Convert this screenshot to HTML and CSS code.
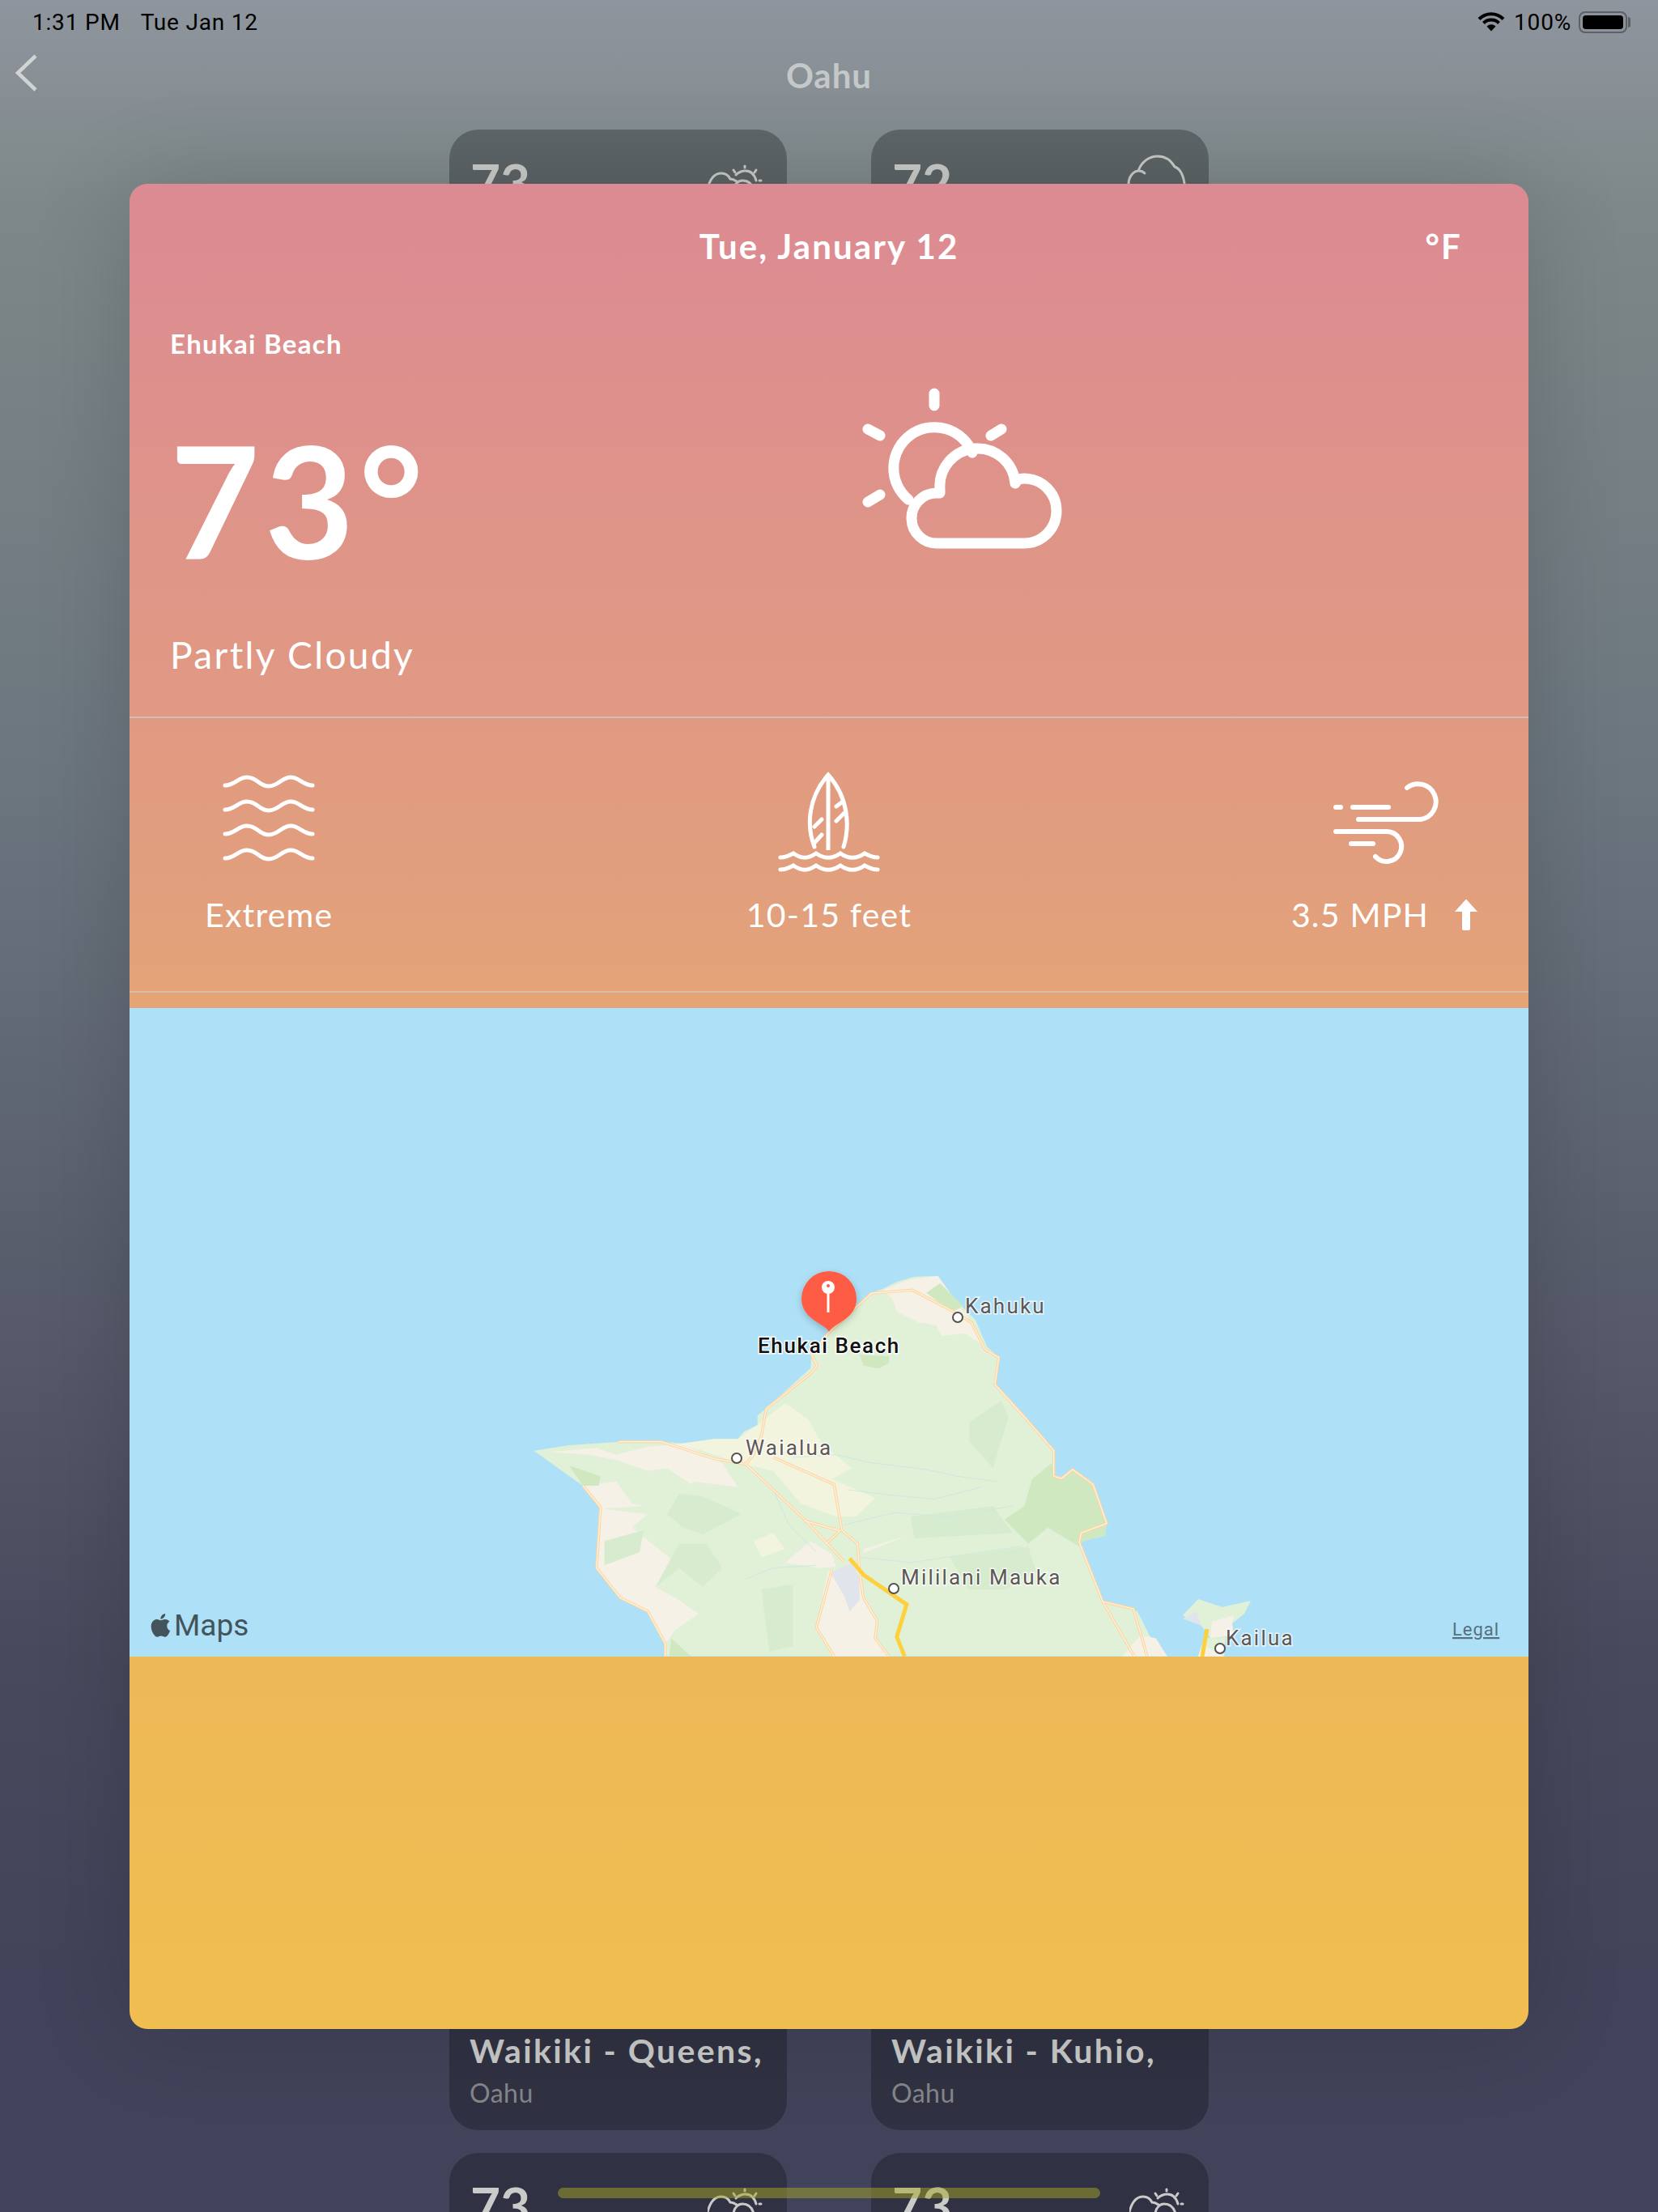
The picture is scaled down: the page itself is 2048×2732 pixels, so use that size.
FILE: index.html
```html
<!DOCTYPE html>
<html lang="en">
<head>
    <meta charset="UTF-8">
    <meta name="viewport" content="width=device-width, initial-scale=1.0">
    <title>Oahu - Ehukai Beach</title>
    <link rel="stylesheet" href="styles.css">
</head>
<body>

    <svg class="defs" width="0" height="0">
        <symbol id="mini-sun-cloud" viewBox="0 0 70 50">
            <g fill="none" stroke="currentColor" stroke-width="3" stroke-linecap="round">
                <path d="M46 4V6M32 9L34 12M60 9L58 12M64 22H66"/>
                <path d="M35 15C38 12 42 10 47 10C54 10 58 15 60 22"/>
                <path d="M0 32C3 20 8 13 17 13C22 13 26 16 28 20C30 20 33 21 36 23"/>
                <path d="M32 34C33 26 38 22 43 22C50 22 55 26 57 34"/>
            </g>
        </symbol>
    </svg>

    <div class="page">
        <div class="status-bar">
            <div class="status-left"><span>1:31 PM</span><span>Tue Jan 12</span></div>
            <div class="status-right">
                <svg class="wifi" viewBox="0 0 34 24" width="34" height="24">
                    <g fill="none" stroke="#000" stroke-width="4">
                        <path d="M2 8.500A21 21 0 0 1 32 8.500"/>
                        <path d="M7.500 13.500A13.500 13.500 0 0 1 26.500 13.500"/>
                    </g>
                    <path d="M11.500 17.500A8 8 0 0 1 22.500 17.500L17 23.500Z" fill="#000"/>
                </svg>
                <span>100%</span>
                <div class="battery"><div class="battery-fill"></div></div>
            </div>
        </div>

        <div class="nav">
            <svg class="back" viewBox="0 0 32 48" width="32" height="48">
                <path d="M28 3L6 24L28 45" fill="none" stroke="#d2d4d4" stroke-width="4.500"/>
            </svg>
            <div class="nav-title">Oahu</div>
        </div>

        <div class="spots">
            <div class="spot">
                <div class="spot-top">
                    <div class="spot-temp">73</div>
                    <svg class="mini-icon"><use href="#mini-sun-cloud"/></svg>
                </div>
            </div>
            <div class="spot">
                <div class="spot-top">
                    <div class="spot-temp">72</div>
                    <svg class="mini-cloud" viewBox="0 0 74 50" width="74" height="50">
                        <path d="M2 38C2 28 8 21 15 21C18 21 20 22 22 24M14 21C18 10 27 3 38 3C48 3 55 9 59 16C65 18 69 24 71 36" fill="none" stroke="currentColor" stroke-width="3" stroke-linecap="round"/>
                    </svg>
                </div>
            </div>
            <div class="spot"></div><div class="spot"></div>
            <div class="spot"></div><div class="spot"></div>
            <div class="spot"></div><div class="spot"></div>
            <div class="spot"></div><div class="spot"></div>
            <div class="spot"></div><div class="spot"></div>
            <div class="spot"></div><div class="spot"></div>
            <div class="spot spot-low">
                <div class="spot-name">Waikiki - Queens,</div>
                <div class="spot-island">Oahu</div>
            </div>
            <div class="spot spot-low">
                <div class="spot-name">Waikiki - Kuhio,</div>
                <div class="spot-island">Oahu</div>
            </div>
            <div class="spot">
                <div class="spot-top">
                    <div class="spot-temp">73</div>
                    <svg class="mini-icon"><use href="#mini-sun-cloud"/></svg>
                </div>
            </div>
            <div class="spot">
                <div class="spot-top">
                    <div class="spot-temp">73</div>
                    <svg class="mini-icon"><use href="#mini-sun-cloud"/></svg>
                </div>
            </div>
        </div>

        <div class="sheet">
            <div class="today">
                <div class="date-row">
                    <div></div>
                    <div class="date">Tue, January 12</div>
                    <div class="unit">°F</div>
                </div>
                <div class="location">Ehukai Beach</div>
                <div class="hero">
                    <div class="temp">73°</div>
                    <svg class="hero-icon" viewBox="1060 480 254 204" width="254" height="204">
                        <g fill="none" stroke="#fff" stroke-linecap="round" stroke-linejoin="round" stroke-width="13">
                            <path d="M1152 489V504M1235 533L1222 541M1070 533L1085 541M1085 614L1070 623"/>
                            <path d="M1120 620A50.500 50.500 0 1 1 1199 562"/>
                            <path d="M1156 674H1263A40 40 0 0 0 1263 594C1258 594 1254 596 1252 600A44 44 0 0 0 1159 607V612H1154A31 31 0 0 0 1156 674Z"/>
                        </g>
                    </svg>
                </div>
                <div class="summary">Partly Cloudy</div>
            </div>

            <div class="stats">
                <div class="stat stat-swell">
                    <svg viewBox="259 950 150 130" width="150" height="130">
                        <g fill="none" stroke="#fff" stroke-width="5" stroke-linecap="round">
                            <path d="M280 970C292 970 296 960 307 960C320 960 322 971 334 971C346 971 350 960 361 960C372 960 376 970 388 970"/>
                            <path d="M280 1000C292 1000 296 990 307 990C320 990 322 1001 334 1001C346 1001 350 990 361 990C372 990 376 1000 388 1000"/>
                            <path d="M280 1030C292 1030 296 1020 307 1020C320 1020 322 1031 334 1031C346 1031 350 1020 361 1020C372 1020 376 1030 388 1030"/>
                            <path d="M280 1060C292 1060 296 1050 307 1050C320 1050 322 1061 334 1061C346 1061 350 1050 361 1050C372 1050 376 1060 388 1060"/>
                        </g>
                    </svg>
                    <div class="stat-label">Extreme</div>
                </div>
                <div class="stat">
                    <svg viewBox="949 950 150 130" width="150" height="130">
                        <g fill="none" stroke="#fff" stroke-width="5" stroke-linecap="round">
                            <path d="M1006 1046C996 1020 998 985 1023 957C1048 985 1050 1020 1042 1046"/>
                            <path d="M1023 957V1050" stroke-linecap="butt"/>
                            <path d="M1006 1021L1015 1012M1006 1041L1015 1031M1033 996L1041 990M1033 1014L1043 1004"/>
                            <path d="M964 1059C972 1059 976 1056 980 1054C990 1061 998 1061 1008 1054C1018 1061 1028 1061 1038 1054C1048 1061 1058 1061 1068 1054C1072 1056 1076 1059 1084 1059"/>
                            <path d="M964 1074C972 1074 976 1071 980 1069C990 1076 998 1076 1008 1069C1018 1076 1028 1076 1038 1069C1048 1076 1058 1076 1068 1069C1072 1071 1076 1074 1084 1074"/>
                        </g>
                    </svg>
                    <div class="stat-label">10-15 feet</div>
                </div>
                <div class="stat stat-wind">
                    <svg viewBox="1635 950 150 130" width="150" height="130">
                        <g fill="none" stroke="#fff" stroke-width="6" stroke-linecap="round">
                            <path d="M1650 997H1656M1671 997H1715M1678 1012H1755A22 22 0 1 0 1738 973"/>
                            <path d="M1650 1027H1713A18.500 18.500 0 1 1 1699 1058M1669 1042H1696"/>
                        </g>
                    </svg>
                    <div class="stat-label">
                        <span>3.5 MPH</span>
                        <svg class="arrow" viewBox="0 0 28 40" width="28" height="40">
                            <path d="M14 0.500L28 16H19V37Q19 39 17 39H11Q9 39 9 37V16H0Z" fill="#fff"/>
                        </svg>
                    </div>
                </div>
            </div>

            <svg class="map" viewBox="160 1245 1728 801" width="1728" height="801">
                <defs>
                    <filter id="pin-shadow" x="-40%" y="-40%" width="180%" height="180%">
                        <feDropShadow dx="0" dy="3" stdDeviation="5" flood-color="#000" flood-opacity="0.22"/>
                    </filter>
                    <g id="roads">
                        <path d="M255 722L365 722L500 785L580 805L600 770L620 700L632 600L745 470L762 440L748 400L790 320L900 172L1005 160L1110 240L1155 280L1190 380L1225 410L1215 510L1290 630L1365 755L1365 850L1385 858L1413 825L1465 880L1500 1025L1435 1060L1430 1095L1490 1315L1570 1517"/>
                        <path d="M1490 1315L1568 1341L1603 1517"/>
                        <path d="M580 805L730 1010L830 1165"/>
                        <path d="M650 780L805 880L825 1050L865 1100L870 1200L880 1300L915 1385L910 1450L945 1517"/>
                        <path d="M730 1015L820 1052L785 1100"/>
                        <path d="M165 885L210 965L200 1190L260 1300L330 1350L375 1470L375 1517"/>
                        <path d="M800 1195L760 1410L805 1517"/>
                    </g>
                </defs>
                <rect x="160" y="1245" width="1728" height="801" fill="#aee1f7"/>

                <!-- map drawn in the coordinates of the island crop -->
                <g transform="translate(640 1540) scale(0.4847 0.3333)">
                    <path class="land" d="M40 755L130 735L255 722L365 722L420 728L500 712L560 712L575 685L610 660L610 625L635 595L745 450L748 405L790 320L900 170L930 155L965 130L1010 110L1070 108L1110 190L1165 270L1195 370L1225 410L1215 510L1290 630L1365 755L1365 850L1385 858L1415 825L1465 880L1500 1025L1495 1070L1440 1090L1430 1100L1460 1200L1490 1315L1578 1350L1609 1440L1654 1517L375 1517L375 1470L330 1350L260 1300L200 1190L210 965L165 885Z"/>
                    <path class="urban" d="M1000 120L1070 108L1110 190L1150 270L1190 370L1140 320L1080 330L1065 290L1020 280L965 240L955 195L930 160Z"/>
                    <path class="pale" d="M580 690L610 660L680 580L740 640L770 720L800 760L850 820L800 860L910 930L860 1000L810 1000L720 950L650 830L560 800L480 760L410 730L500 712L560 712Z"/>
                    <path class="urban" d="M80 760L200 745L250 770L330 740L420 730L520 800L560 890L450 870L440 880L380 820L330 830L250 790L180 770Z"/>
                    <path class="urban" d="M165 885L250 870L290 950L320 960L215 970L330 990L290 1040L350 1110L410 1180L350 1260L400 1300L460 1360L400 1420L375 1470L330 1350L260 1300L200 1190L210 965Z"/>
                    <path class="urban" d="M680 1170L745 1090L800 1140L810 1185L770 1190ZM880 1120L990 1070L880 1135Z"/>
                    <path class="urban" d="M790 1200L870 1180L880 1310L915 1385L910 1450L945 1517L800 1517L760 1410Z"/>
                    <path class="urban" d="M1540 1517L1585 1440L1625 1450L1654 1517Z"/>
                    <path class="pale" d="M600 1090L650 1060L680 1120L620 1150Z"/>
                    <path class="park" d="M1360 800L1365 850L1385 858L1415 825L1465 880L1500 1025L1495 1070L1440 1090L1430 1110L1350 1040L1300 1100L1240 1010L1290 960L1310 860Z"/>
                    <path class="park-light" d="M1100 1150L1300 1110L1320 1200L1240 1270L1150 1270Z"/>
                    <path class="park" d="M870 400L945 405L945 430L920 450L880 440Z"/>
                    <path class="park" d="M1040 170L1075 135L1135 220L1105 240Z"/>
                    <path class="park-light" d="M380 990L410 915L440 920L470 925L570 990L470 1065L420 1040Z"/>
                    <path class="park-light" d="M1150 650L1230 570L1250 630L1210 820L1150 720Z"/>
                    <path class="park-light" d="M1000 1000L1210 960L1260 1060L1010 1080Z"/>
                    <path class="park-light" d="M620 1270L700 1250L700 1480L640 1500Z"/>
                    <path class="park" d="M130 810L210 850L205 885L165 885ZM385 1517L390 1450L440 1517Z"/>
                    <path class="park-light" d="M220 1090L320 1050L310 1130L220 1180ZM350 1260L410 1100L480 1100L520 1190L470 1260L410 1190Z"/>
                    <path class="lake" d="M795 1205L855 1170L870 1230L870 1310L845 1350L830 1290Z"/>

                    <g class="streams">
                        <path d="M700 780L810 770L900 800L1040 825L1120 850L1220 870"/>
                        <path d="M840 900L950 920L1060 935L1180 890"/>
                        <path d="M830 1030L960 985L1100 1000L1260 960"/>
                        <path d="M870 1150L1000 1170L1280 1110"/>
                        <path d="M580 1230L650 1190L760 1180"/>
                        <path d="M650 900L690 1030L760 1130"/>
                    </g>

                    <use class="road-edge" href="#roads"/>
                    <use class="road-core" href="#roads"/>
                    <path class="highway" d="M845 1155L880 1215L990 1325L965 1445L985 1517"/>
                </g>

                <path class="land" d="M1461 1995L1480 1975L1510 1985L1545 1977L1537 1993L1522 2005L1524 2020L1495 2023L1484 2008Z"/>
                <path class="urban" d="M1495 2023L1497 2003L1524 1995L1522 2005L1524 2020Z"/>
                <path class="lake" d="M1461 1999L1478 1990L1484 2008Z"/>
                <path class="land" d="M1480 2046L1488 2023L1514 2022L1512 2046Z"/>
                <path class="urban" d="M1480 2046L1485 2030L1500 2040L1512 2046Z"/>
                <path class="highway" d="M1491 2012L1485 2046"/>

                <path class="pin" d="M1024 1645C1020 1635 990 1630 990 1604A34 34 0 0 1 1058 1604C1058 1630 1028 1635 1024 1645Z" filter="url(#pin-shadow)"/>
                <circle cx="1023" cy="1590" r="8" fill="#fff"/>
                <circle cx="1023" cy="1588" r="2" fill="#ff5b44"/>
                <rect x="1021.500" y="1596" width="3" height="25" fill="#fff"/>

                <circle class="town" cx="1183" cy="1627" r="6"/>
                <circle class="town" cx="910" cy="1801" r="6"/>
                <circle class="town" cx="1104" cy="1962" r="6"/>
                <circle class="town" cx="1507" cy="2036" r="6"/>

                <text class="map-label beach" x="1024" y="1671">Ehukai Beach</text>
                <text class="map-label" x="1192" y="1622">Kahuku</text>
                <text class="map-label" x="921" y="1797">Waialua</text>
                <text class="map-label" x="1113" y="1957">Mililani Mauka</text>
                <text class="map-label" x="1514" y="2032">Kailua</text>

                <path class="apple" transform="translate(184 1993) scale(1.200)" d="M12.152 6.896c-.948 0-2.415-1.078-3.96-1.04-2.04.027-3.91 1.183-4.961 3.014-2.117 3.675-.546 9.103 1.519 12.09 1.013 1.454 2.208 3.09 3.792 3.039 1.52-.065 2.09-.987 3.935-.987 1.831 0 2.35.987 3.96.948 1.637-.026 2.676-1.48 3.676-2.948 1.156-1.688 1.636-3.325 1.662-3.415-.039-.013-3.182-1.221-3.22-4.857-.026-3.04 2.48-4.494 2.597-4.559-1.429-2.09-3.623-2.324-4.39-2.376-2-.156-3.675 1.09-4.61 1.09zM15.53 3.83c.843-1.012 1.4-2.427 1.245-3.83-1.207.052-2.662.805-3.532 1.818-.78.896-1.454 2.338-1.273 3.714 1.338.104 2.715-.688 3.559-1.701"/>
                <text class="maps-word" x="215" y="2020">Maps</text>
                <text class="legal" x="1794" y="2020">Legal</text>
            </svg>
        </div>

        <div class="home-bar"></div>
    </div>

</body>
</html>
```

FILE: styles.css
```css
* {
    box-sizing: border-box;
}

body {
    margin: 0;
    font-family: 'Lato', 'Noto Sans', sans-serif;
    color: white;
    background: #41435a;
}

.defs {
    position: absolute;
}

.page {
    position: relative;
    width: 2048px;
    height: 2732px;
    overflow: hidden;
    background: linear-gradient(180deg, #8f959e 0%, #7e8889 9%, #6b757e 36%, #565a6a 60%, #474a5c 75%, #41435a 90%);
}

/* status bar */

.status-bar {
    display: flex;
    justify-content: space-between;
    align-items: center;
    height: 54px;
    padding: 0 38px 0 40px;
    font-family: 'Roboto', sans-serif;
    font-size: 28px;
    letter-spacing: 0.8px;
    color: black;
}

.status-left {
    display: flex;
    gap: 25px;
}

.status-right {
    display: flex;
    align-items: center;
    gap: 9px;
}

.wifi {
    margin-right: 2px;
}

.battery {
    position: relative;
    width: 60px;
    height: 27px;
    padding: 3px;
    border: 2px solid #5c6166;
    border-radius: 8px;
}

.battery::after {
    content: "";
    position: absolute;
    top: 5px;
    right: -6px;
    width: 3px;
    height: 13px;
    border-radius: 0 3px 3px 0;
    background: #5c6166;
}

.battery-fill {
    height: 100%;
    border-radius: 4px;
    background: black;
}

/* nav */

.nav {
    position: relative;
    height: 106px;
    text-align: center;
}

.back {
    position: absolute;
    left: 16px;
    top: 12px;
}

.nav-title {
    padding-top: 13px;
    font-size: 42px;
    line-height: 52px;
    font-weight: 700;
    letter-spacing: 1px;
    color: #c4c8c9;
}

/* cards behind the sheet */

.spots {
    display: grid;
    grid-template-columns: 417px 417px;
    grid-auto-rows: 284.4px;
    justify-content: center;
    gap: 28px 104px;
}

.spot {
    padding: 30px 28px 30px 26px;
    border-radius: 36px;
    background: rgba(10, 14, 16, 0.3);
    color: #c9cbc9;
}

.spot-top {
    display: flex;
    justify-content: space-between;
}

.spot-temp {
    font-size: 64px;
    line-height: 70px;
    font-weight: 700;
}

.mini-icon {
    width: 70px;
    height: 50px;
    margin-top: 11px;
}

.mini-cloud {
    margin-right: -1px;
}

.spot-low {
    display: flex;
    flex-direction: column;
    justify-content: flex-end;
    padding: 0 25px 26px;
}

.spot-name {
    font-size: 41px;
    line-height: 56px;
    font-weight: 700;
    letter-spacing: 2.4px;
    white-space: nowrap;
}

.spot-island {
    margin-top: 4px;
    font-size: 32px;
    line-height: 40px;
    letter-spacing: 0.5px;
    color: #84868a;
}

/* sheet */

.sheet {
    position: absolute;
    left: 160px;
    top: 227px;
    width: 1728px;
    height: 2279px;
    border-radius: 22px;
    overflow: hidden;
    background: linear-gradient(180deg, #dc8a93 0%, #e2a07c 40%, #eab25e 60%, #f0be50 100%);
    box-shadow: 0 0 120px rgba(0, 0, 0, 0.16);
}

.today {
    height: 660px;
    padding: 47px 50px 0;
    border-bottom: 2px solid rgba(205, 205, 205, 0.7);
}

.date-row {
    display: grid;
    grid-template-columns: 1fr auto 1fr;
    padding-right: 32px;
    padding-left: 32px;
    margin: 0 -50px;
    font-size: 42px;
    line-height: 60px;
    font-weight: 700;
    letter-spacing: 2.1px;
}

.unit {
    justify-self: end;
    padding-right: 50px;
}

.location {
    margin-top: 70px;
    font-size: 33px;
    line-height: 40px;
    font-weight: 700;
    letter-spacing: 1.3px;
}

.hero {
    display: grid;
    grid-template-columns: 852px auto;
    height: 198px;
    margin-top: 33px;
}

.temp {
    padding-top: 44px;
    font-size: 191px;
    line-height: 191px;
    font-weight: 700;
    letter-spacing: 6px;
}

.hero-icon {
    display: block;
}

.summary {
    margin-top: 106px;
    font-size: 46px;
    line-height: 56px;
    letter-spacing: 2.4px;
}

.stats {
    display: grid;
    grid-template-columns: 1fr auto 1fr;
    align-items: start;
    height: 339px;
    padding: 63px 63px 0;
    border-bottom: 2px solid rgba(205, 205, 205, 0.6);
}

.stat {
    display: flex;
    flex-direction: column;
    align-items: center;
}

.stat-swell {
    justify-self: start;
    margin-left: 30px;
}

.stat-wind {
    justify-self: end;
}

.stat-label {
    display: flex;
    align-items: center;
    margin-top: 25px;
    font-size: 41px;
    line-height: 50px;
    letter-spacing: 1.2px;
}

.arrow {
    margin-left: 32px;
}

/* map */

.map {
    display: block;
    margin-top: 19px;
}

.land {
    fill: #e0f1d8;
}

.urban {
    fill: #f6f1e6;
}

.pale {
    fill: #f3f4de;
}

.park {
    fill: #cfe8c0;
}

.park-light {
    fill: #d7ecce;
}

.lake {
    fill: #dfe5ea;
}

.streams path {
    fill: none;
    stroke: #cfe8e0;
    stroke-width: 1;
    vector-effect: non-scaling-stroke;
}

#roads path {
    fill: none;
    vector-effect: non-scaling-stroke;
}

.road-edge {
    stroke: #fbd7a4;
    stroke-width: 3.5;
}

.road-core {
    stroke: #fff3e2;
    stroke-width: 1.2;
}

.highway {
    fill: none;
    stroke: #fdd03c;
    stroke-width: 5;
    vector-effect: non-scaling-stroke;
}

.pin {
    fill: #ff5b44;
}

.town {
    fill: white;
    stroke: #55514e;
    stroke-width: 2;
}

.map-label {
    font-family: 'Roboto', sans-serif;
    font-size: 26px;
    letter-spacing: 2.2px;
    fill: #5c5856;
    stroke: rgba(255, 255, 255, 0.75);
    stroke-width: 3px;
    paint-order: stroke;
}

.beach {
    text-anchor: middle;
    fill: #111;
    stroke: white;
    font-weight: 500;
    letter-spacing: 1.6px;
}

.apple {
    fill: #44545c;
}

.maps-word {
    font-family: 'Roboto', sans-serif;
    font-size: 37px;
    fill: #44545c;
}

.legal {
    font-family: 'Roboto', sans-serif;
    font-size: 22px;
    letter-spacing: 1px;
    fill: #56707e;
    text-decoration: underline;
}

.home-bar {
    position: absolute;
    left: 689px;
    top: 2702px;
    width: 670px;
    height: 13px;
    border-radius: 7px;
    background: rgba(165, 165, 40, 0.5);
}
```
